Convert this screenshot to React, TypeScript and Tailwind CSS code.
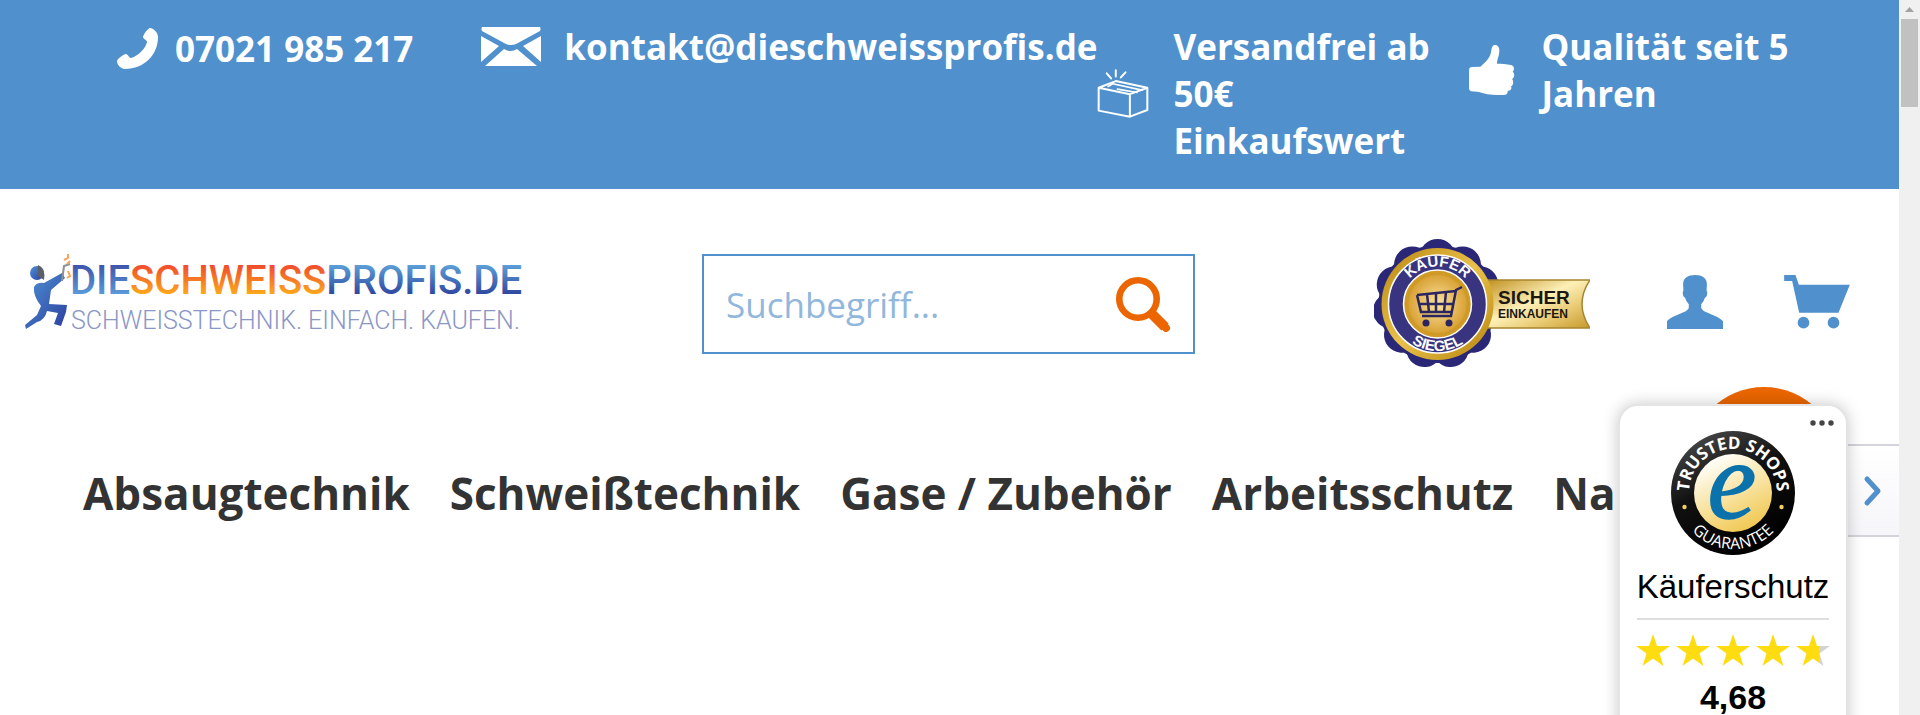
import React from 'react';

const navItems = ['Absaugtechnik', 'Schweißtechnik', 'Gase / Zubehör', 'Arbeitsschutz', 'Na'];

const PhoneIcon = () => (
  <svg viewBox="0 0 41 41" className="h-[41px] w-[41px] shrink-0" fill="currentColor" aria-hidden="true">
    <path d="M33 0C36 0 41 4 41 9C41 27 27 41 8 41C4 41 0 37 0 33C0 31 7 26 9 26C11 26 12 30 14 30C21 28 29 20 30 14C30 12 26 11 26 9C26 7 31 0 33 0Z" />
  </svg>
);

const MailIcon = () => (
  <svg viewBox="0 0 60 39" className="h-[39px] w-[60px] shrink-0" fill="currentColor" aria-hidden="true">
    <path d="M1 0H59Q60 2 59 4L35 17Q30 19 25 17L1 4Q0 2 1 0Z" />
    <path d="M0 9L18 19L0 35ZM60 9L42 19L60 35ZM4 39L23 22Q30 26 36 22L56 39Z" />
  </svg>
);

const ParcelIcon = () => (
  <svg viewBox="0 0 153 146" className="h-[49px] w-[52px] shrink-0" fill="none" stroke="currentColor" strokeWidth="6" strokeLinejoin="round" strokeLinecap="round" aria-hidden="true">
    <path d="M4 56V124L97 142V75ZM97 75L149 56V122L97 142M4 56L55 36L149 56" />
    <path d="M32 52L46 44L133 63M60 60L118 70" strokeWidth="5" />
    <path d="M28 13L41 28M55 4V22M84 10L70 25" />
  </svg>
);

const ThumbIcon = () => (
  <svg viewBox="0 0 138 150" className="h-[50px] w-[46px] shrink-0" fill="currentColor" aria-hidden="true">
    <path d="M78 0C86 0 91 6 91 16C91 34 84 42 84 56C98 56 112 57 126 60C137 62 137 76 131 80C138 86 137 98 129 102C135 108 133 122 126 124C130 132 124 138 116 138Q117 150 104 150C80 150 60 150 40 144C30 140 20 140 6 139Q0 138 0 130V76Q0 66 10 66L34 65C50 52 62 40 66 22C68 8 70 0 78 0Z" />
  </svg>
);

const SearchIcon = () => (
  <svg viewBox="0 0 56 56" className="h-[56px] w-[56px]" fill="none" stroke="currentColor" aria-hidden="true">
    <circle cx="22" cy="22" r="18.7" strokeWidth="6.6" />
    <path d="M36 37L49 50" strokeWidth="10" />
    <path d="M37 38L50 51" strokeWidth="8" strokeLinecap="round" />
  </svg>
);

const UserIcon = () => (
  <svg viewBox="0 0 167 161" className="h-[54px] w-[56px]" fill="currentColor" aria-hidden="true">
    <path d="M84 0C104 0 119 8 119 28L118 46Q122 50 119 60Q117 66 113 68Q110 80 102 87V98C106 114 150 118 167 138V161H0V138C17 118 61 114 65 98V87Q57 80 54 68Q50 66 48 60Q45 50 49 46L48 28C48 8 63 0 84 0Z" />
  </svg>
);

const CartIcon = () => (
  <svg viewBox="0 0 197 174" className="h-[58px] w-[66px]" fill="currentColor" aria-hidden="true">
    <path d="M0 0H34L44 29H197L163 113H45L24 18H0Z" />
    <circle cx="58" cy="143" r="17.5" />
    <circle cx="148" cy="143" r="17.5" />
  </svg>
);

const Logo = () => (
  <svg viewBox="0 0 502 78" className="h-[78px] w-[502px]" aria-label="DieSchweissprofis.de">
    <defs>
      <linearGradient id="logo-die" x1="0" y1="9" x2="0" y2="40" gradientUnits="userSpaceOnUse">
        <stop offset="0" stopColor="#3c50a8" />
        <stop offset="1" stopColor="#5a9ad8" />
      </linearGradient>
      <linearGradient id="logo-fire" x1="0" y1="9" x2="0" y2="40" gradientUnits="userSpaceOnUse">
        <stop offset="0" stopColor="#f0452f" />
        <stop offset="1" stopColor="#fca81c" />
      </linearGradient>
      <linearGradient id="logo-blue" x1="0" y1="9" x2="0" y2="40" gradientUnits="userSpaceOnUse">
        <stop offset="0" stopColor="#5fa5dc" />
        <stop offset="1" stopColor="#3048a0" />
      </linearGradient>
      <linearGradient id="logo-man" x1="0" y1="0" x2="1" y2="1">
        <stop offset="0" stopColor="#4f93d4" />
        <stop offset="1" stopColor="#2c3f9f" />
      </linearGradient>
    </defs>
    <g fill="url(#logo-man)">
      <path d="M9 33Q12 28 19 29L37 19L40 24L26 36L24 50L42 51L41 58L36 72L29 70L33 59L22 57Q20 66 12 68L1 75L0 71L12 61L16 52Q8 42 9 33Z" />
      <circle cx="12" cy="19" r="7" />
    </g>
    <path d="M13 11Q21 14 19 26L13 22Z" fill="#5b6068" />
    <path d="M37 27L39 12L45 10" fill="none" stroke="#8b8f98" strokeWidth="2" />
    <path d="M39 6L43 4L43 0M45 7L42 10M43 17L45 22L42 24" fill="none" stroke="#f7a45c" strokeWidth="2" />
    <text x="45" y="40" fontSize="40" fontWeight="500" fontFamily="'Roboto', sans-serif">
      <tspan fill="url(#logo-die)">DIE</tspan>
      <tspan fill="url(#logo-fire)">SCHWEISS</tspan>
      <tspan fill="url(#logo-blue)">PROFIS.DE</tspan>
    </text>
    <text x="46" y="75" fontSize="25" fontWeight="300" fill="#8a96c6" fontFamily="'Roboto', sans-serif">
      SCHWEISSTECHNIK. EINFACH. KAUFEN.
    </text>
  </svg>
);

const lobes = Array.from({ length: 11 }, (_, i) => (i * 360) / 11);

const BuyerSeal = () => (
  <svg viewBox="0 0 216 132" className="h-[132px] w-[216px]" aria-label="Käufersiegel">
    <defs>
      <linearGradient id="ribbon" x1="0" y1="0" x2="1" y2="1">
        <stop offset="0" stopColor="#c08f1d" />
        <stop offset="0.45" stopColor="#fdf0b8" />
        <stop offset="0.7" stopColor="#e9cb74" />
        <stop offset="1" stopColor="#c6982c" />
      </linearGradient>
      <linearGradient id="seal-gold" x1="0" y1="0" x2="1" y2="1">
        <stop offset="0" stopColor="#b8860f" />
        <stop offset="0.5" stopColor="#e9c14a" />
        <stop offset="1" stopColor="#b5830c" />
      </linearGradient>
      <radialGradient id="seal-core">
        <stop offset="0" stopColor="#fbe3a0" />
        <stop offset="1" stopColor="#d9a236" />
      </radialGradient>
      <path id="seal-top" d="M26 66A37.500 37.500 0 0 1 101 66" />
      <path id="seal-bottom" d="M16.500 66A47 47 0 0 0 110.500 66" />
    </defs>
    <g fill="#2b2777">
      <circle cx="63.500" cy="66" r="59" />
      {lobes.map((a) => (
        <circle key={a} cx="63.500" cy="19" r="18" transform={`rotate(${a} 63.5 66)`} />
      ))}
    </g>
    <path d="M112 42H216Q200 66 216 90H112Z" fill="url(#ribbon)" stroke="#a5872f" strokeWidth="1.500" />
    <circle cx="63.500" cy="66" r="56" fill="url(#seal-gold)" />
    <circle cx="63.500" cy="66" r="49" fill="#38347f" stroke="#fff" strokeWidth="1.500" />
    <circle cx="63.500" cy="66" r="34" fill="#d09a26" stroke="#fff" strokeWidth="1.500" />
    <circle cx="63.500" cy="66" r="29" fill="url(#seal-core)" />
    <g stroke="#2b2560" strokeWidth="2.500" fill="none">
      <path d="M88 49L82 52L77 78H48M43 57L47 74H78M43 57L82 53M45 66H79M53 56L55 74M62 55V74M72 54L70 74" />
    </g>
    <circle cx="52" cy="85" r="3.500" fill="#2b2560" />
    <circle cx="75" cy="85" r="3.500" fill="#2b2560" />
    <g fill="#fff" fontFamily="'Liberation Sans', sans-serif" fontWeight="700" textAnchor="middle">
      <text fontSize="15">
        <textPath href="#seal-top" startOffset="50%">KÄUFER</textPath>
      </text>
      <text fontSize="15">
        <textPath href="#seal-bottom" startOffset="50%">SIEGEL</textPath>
      </text>
    </g>
    <g fill="#1c1810" fontFamily="'Liberation Sans', sans-serif" fontWeight="700">
      <text x="124" y="66" fontSize="19">SICHER</text>
      <text x="124" y="80" fontSize="12">EINKAUFEN</text>
    </g>
  </svg>
);

const TrustSeal = () => (
  <svg viewBox="0 0 124 124" className="h-[124px] w-[124px]" aria-label="Trusted Shops Guarantee">
    <defs>
      <linearGradient id="trust-ring" x1="0" y1="0" x2="0.500" y2="1">
        <stop offset="0" stopColor="#555" />
        <stop offset="0.5" stopColor="#111" />
        <stop offset="1" stopColor="#000" />
      </linearGradient>
      <linearGradient id="trust-core" x1="0.200" y1="0" x2="0.700" y2="1">
        <stop offset="0.1" stopColor="#fffdf5" />
        <stop offset="0.6" stopColor="#f7df95" />
        <stop offset="1" stopColor="#f0c64e" />
      </linearGradient>
      <path id="trust-top" d="M18.700 69.600A44 44 0 1 1 105.300 69.600" />
      <path id="trust-bottom" d="M6 62A56 56 0 0 0 118 62" />
    </defs>
    <circle cx="62" cy="62" r="62" fill="url(#trust-ring)" />
    <circle cx="62" cy="62" r="39" fill="url(#trust-core)" />
    <circle cx="13.500" cy="76" r="2.200" fill="#f0d060" />
    <circle cx="110.500" cy="76" r="2.200" fill="#f0d060" />
    <g fill="#fff" fontFamily="'Open Sans', sans-serif" textAnchor="middle">
      <text fontSize="17" fontWeight="700">
        <textPath href="#trust-top" startOffset="50%">TRUSTED SHOPS</textPath>
      </text>
      <text fontSize="16">
        <textPath href="#trust-bottom" startOffset="50%">GUARANTEE</textPath>
      </text>
    </g>
    <text x="61" y="87" fontSize="110" fontStyle="italic" fill="#0b72ab" stroke="#0b72ab" strokeWidth="1.500" textAnchor="middle" fontFamily="'Liberation Serif', serif">e</text>
  </svg>
);

const Star = ({ fill = 100 }: { fill?: number }) => (
  <svg viewBox="0 0 34 32" className="h-8 w-[34px]" aria-hidden="true">
    <defs>
      <linearGradient id={`star-${fill}`}>
        <stop offset={`${fill}%`} stopColor="#ffdc0f" />
        <stop offset={`${fill}%`} stopColor="#d3d3d3" />
      </linearGradient>
    </defs>
    <path fill={`url(#star-${fill})`} d="M17 0L21 12H34L23.500 19.500L27.500 32L17 24.500L6.500 32L10.500 19.500L0 12H13Z" />
  </svg>
);

const TopBar = () => (
  <div className="flex items-start bg-[#4f90cd] pt-[23px] pb-[25px] pl-[117px] text-[35px] leading-[47px] font-bold text-white">
    <a href="tel:07021985217" className="flex shrink-0 items-center gap-[17px] pt-0.5 whitespace-nowrap">
      <PhoneIcon />
      07021 985 217
    </a>
    <a href="mailto:kontakt@dieschweissprofis.de" className="ml-[68px] flex shrink-0 items-center gap-[23px] whitespace-nowrap">
      <MailIcon />
      kontakt@dieschweissprofis.de
    </a>
    <div className="flex shrink-0 items-center gap-6 self-stretch">
      <ParcelIcon />
      <p className="w-[271px]">Versandfrei ab 50€ Einkaufswert</p>
    </div>
    <div className="ml-[25px] flex flex-1 items-center gap-[26px]">
      <ThumbIcon />
      <p className="flex-1">Qualität seit 5 Jahren</p>
    </div>
  </div>
);

const TrustCard = () => (
  <aside className="absolute top-[404px] right-[51px] flex w-[230px] flex-col items-center rounded-[20px] border-2 border-[#e4e4e4] bg-white px-[17px] pb-10 font-['Liberation_Sans',sans-serif] text-black shadow-[0_0_16px_rgba(0,0,0,0.22)]">
    <button aria-label="Mehr" className="-mr-[5px] flex h-[25px] items-end self-end">
      <svg viewBox="0 0 24 12" className="mb-0.5 h-3 w-6" fill="#444">
        <circle cx="3" cy="6" r="2.700" />
        <circle cx="12" cy="6" r="2.700" />
        <circle cx="21" cy="6" r="2.700" />
      </svg>
    </button>
    <TrustSeal />
    <p className="mt-[13px] text-[33px] leading-[38px]">Käuferschutz</p>
    <hr className="mt-3 w-full border-t-2 border-[#dedede]" />
    <div className="mt-3.5 flex gap-[6px]">
      <Star />
      <Star />
      <Star />
      <Star />
      <Star fill={68} />
    </div>
    <p className="mt-3 text-[34px] leading-[38px] font-bold">4,68</p>
  </aside>
);

const App = () => {
  return (
    <div className="flex h-screen overflow-hidden bg-white font-['Open_Sans',sans-serif]">
      <div className="relative min-w-0 flex-1 overflow-hidden">
        <TopBar />

        <header className="flex items-center pt-[49px] pr-[49px] pl-[25px]">
          <a href="#" className="mt-4 shrink-0 self-start">
            <Logo />
          </a>
          <form className="mr-[179px] ml-[175px] flex h-[100px] min-w-0 flex-1 items-center border-2 border-[#4f90cd] pt-0.5 pr-[21px] pl-[22px]">
            <input
              type="search"
              aria-label="Suchbegriff"
              placeholder="Suchbegriff..."
              className="min-w-0 flex-1 text-[35px] leading-[48px] outline-none placeholder:text-[#91b7dd]"
            />
            <button type="button" aria-label="Suchen" className="text-[#eb6600]">
              <SearchIcon />
            </button>
          </form>
          <BuyerSeal />
          <a href="#konto" aria-label="Mein Konto" className="mb-1 ml-[77px] text-[#4f90cd]">
            <UserIcon />
          </a>
          <a href="#warenkorb" aria-label="Warenkorb" className="ml-[61px] text-[#4f90cd]">
            <CartIcon />
          </a>
        </header>

        <nav className="mt-[74px] flex h-[93px] items-stretch justify-between pl-[83px]">
          <ul className="flex items-center gap-10 pt-1 text-[44px] leading-[60px] font-bold whitespace-nowrap text-[#333]">
            {navItems.map((item) => (
              <li key={item}>
                <a href="#">{item}</a>
              </li>
            ))}
          </ul>
          <button aria-label="Weiter" className="flex w-[80px] items-center justify-end border-y-2 border-[#d4d4dc] bg-gradient-to-b from-white to-[#f6f6fa] pr-4">
            <svg viewBox="0 0 20 32" className="h-8 w-5" fill="none" stroke="#4f90cd" strokeWidth="5" strokeLinecap="round" strokeLinejoin="round">
              <path d="M4 4L15 16L4 28" />
            </svg>
          </button>
        </nav>

        <div className="absolute top-[387px] right-[60px] h-[150px] w-[150px] rounded-full bg-[#eb6600]" />
        <TrustCard />
      </div>

      <div className="flex w-[21px] shrink-0 flex-col items-center bg-[#f0f0f0]">
        <svg viewBox="0 0 21 19" className="h-[19px] w-[21px]" fill="#a3a3a3" aria-hidden="true">
          <path d="M6 12L10.500 7L15 12Z" />
        </svg>
        <div className="h-[88px] w-[17px] bg-[#c1c1c1]" />
      </div>
    </div>
  );
};

export default App;
